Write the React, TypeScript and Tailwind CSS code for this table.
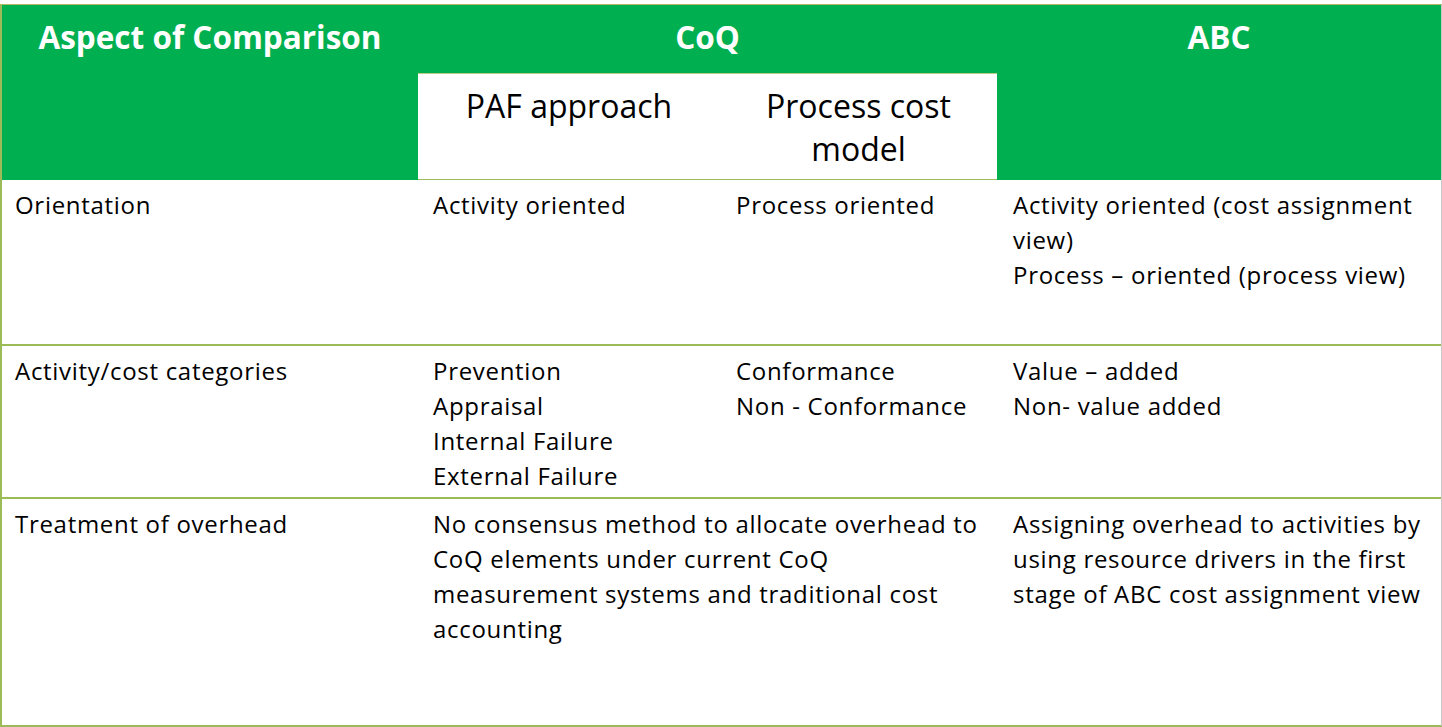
const font = { fontFamily: '"Open Sans", "Noto Sans", sans-serif' };

export default function App() {
  return (
    <div className="w-[1442px] h-[727px] bg-white pt-[4px]" style={font}>
      <div className="w-[1442px] h-[723px] border-t border-t-[#b1b866] border-l-2 border-l-[#9bbb59] border-r border-r-[#c8c8c8] border-b-2 border-b-[#9bbb59] grid grid-cols-[416px_302px_277px_1fr] grid-rows-[175px_166px_153px_1fr] text-[24px] tracking-[0.7px] leading-[35px] text-black">
        {/* header */}
        <div className="bg-[#00b050] text-white font-bold text-[31.5px] tracking-normal text-center pt-[12px] leading-[40px]">
          Aspect of Comparison
        </div>
        <div className="col-span-2 bg-[#00b050] flex flex-col">
          <div className="text-white font-bold text-[31.5px] tracking-normal text-center pt-[12px] leading-[40px] h-[68px]">CoQ</div>
          <div className="flex-1 bg-white border-t border-t-[#b8cc86] border-b border-b-[#9bbb59] grid grid-cols-[302px_1fr] text-[32px] tracking-normal leading-[43px] text-center pt-[10px]">
            <div>PAF approach</div>
            <div className="px-[30px]">Process cost model</div>
          </div>
        </div>
        <div className="bg-[#00b050] text-white font-bold text-[31.5px] tracking-normal text-center pt-[12px] leading-[40px]">ABC</div>

        {/* row 1 */}
        <div className="pl-[13px] pt-[7px] border-b-2 border-b-[#9bbb59]">Orientation</div>
        <div className="pl-[15px] pt-[7px] border-b-2 border-b-[#9bbb59]">Activity oriented</div>
        <div className="pl-[16px] pt-[7px] border-b-2 border-b-[#9bbb59]">Process oriented</div>
        <div className="pl-[16px] pr-[12px] pt-[7px] border-b-2 border-b-[#9bbb59]">
          <div>Activity oriented (cost assignment view)</div>
          <div>Process – oriented (process view)</div>
        </div>

        {/* row 2 */}
        <div className="pl-[13px] pt-[7px] border-b-2 border-b-[#9bbb59]">Activity/cost categories</div>
        <div className="pl-[15px] pt-[7px] border-b-2 border-b-[#9bbb59]">
          <div>Prevention</div>
          <div>Appraisal</div>
          <div>Internal Failure</div>
          <div>External Failure</div>
        </div>
        <div className="pl-[16px] pt-[7px] border-b-2 border-b-[#9bbb59]">
          <div>Conformance</div>
          <div>Non - Conformance</div>
        </div>
        <div className="pl-[16px] pt-[7px] border-b-2 border-b-[#9bbb59]">
          <div>Value – added</div>
          <div>Non- value added</div>
        </div>

        {/* row 3 */}
        <div className="pl-[13px] pt-[7px]">Treatment of overhead</div>
        <div className="col-span-2 pl-[15px] pr-[10px] pt-[7px]">
          No consensus method to allocate overhead to CoQ elements under current CoQ measurement systems and traditional cost accounting
        </div>
        <div className="pl-[16px] pr-[12px] pt-[7px]">
          Assigning overhead to activities by using resource drivers in the first stage of ABC cost assignment view
        </div>
      </div>
    </div>
  );
}
